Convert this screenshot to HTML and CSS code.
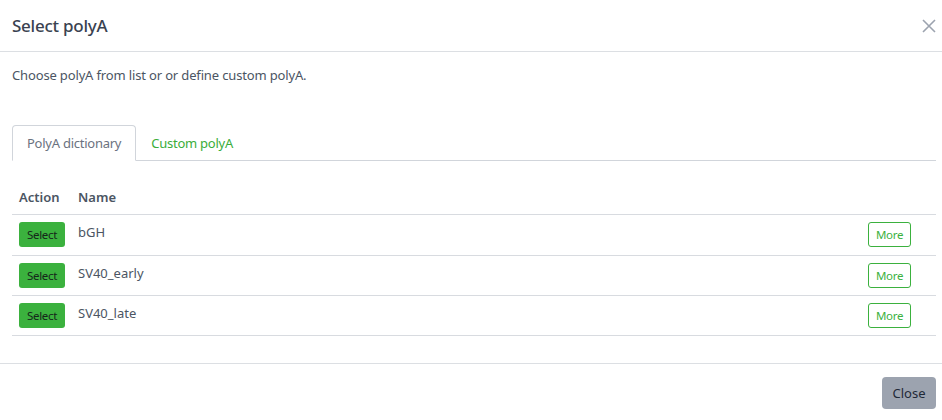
FILE: index.html
```html
<!DOCTYPE html>
<html>
<head>
<meta charset="utf-8">
<link rel="stylesheet" href="styles.css">
</head>
<body>
<div class="modal">
  <div class="modal-header">
    <h5 class="modal-title">Select polyA</h5>
    <button class="btn-close" aria-label="Close">
      <svg width="14" height="14" viewBox="0 0 14 14"><path d="M1 1L13 13M13 1L1 13" stroke="#9ca3af" stroke-width="1.6" fill="none"/></svg>
    </button>
  </div>
  <div class="modal-body">
    <p class="intro">Choose polyA from list or or define custom polyA.</p>
    <div class="tabs">
      <div class="tab active">PolyA dictionary</div>
      <div class="tab">Custom polyA</div>
    </div>
    <table class="table">
      <thead>
        <tr><th class="c-action">Action</th><th class="c-name">Name</th><th class="c-more"></th></tr>
      </thead>
      <tbody>
        <tr class="first"><td class="c-action"><button class="btn-select">Select</button></td><td class="c-name">bGH</td><td class="c-more"><button class="btn-more">More</button></td></tr>
        <tr><td class="c-action"><button class="btn-select">Select</button></td><td class="c-name">SV40_early</td><td class="c-more"><button class="btn-more">More</button></td></tr>
        <tr><td class="c-action"><button class="btn-select">Select</button></td><td class="c-name">SV40_late</td><td class="c-more"><button class="btn-more">More</button></td></tr>
      </tbody>
    </table>
  </div>
  <div class="modal-footer">
    <button class="btn-close-footer">Close</button>
  </div>
</div>
</body>
</html>
```
FILE: styles.css
```css
html, body {
  margin: 0;
  padding: 0;
  background: #ffffff;
}
body {
  font-family: "Noto Sans", "Open Sans", sans-serif;
  color: #4b5563;
  font-size: 13px;
}
.modal {
  width: 942px;
}
.modal-header {
  height: 52px;
  border-bottom: 1px solid #dcdfe3;
  display: flex;
  align-items: center;
  justify-content: space-between;
  padding: 0 6px 0 12px;
  box-sizing: border-box;
}
.modal-title {
  margin: 0;
  font-size: 17px;
  font-weight: 500;
  color: #3a4250;
  letter-spacing: -0.25px;
}
.btn-close {
  border: 0;
  background: transparent;
  padding: 0;
  width: 14px;
  height: 14px;
  display: flex;
}
.modal-body {
  padding: 13px 6px 27px 12px;
}
.intro {
  margin: 0 0 40px 0;
  line-height: 20px;
  color: #4b5563;
  letter-spacing: -0.15px;
}
.tabs {
  display: flex;
  height: 35px;
  border-bottom: 1px solid #d1d5db;
}
.tab {
  padding: 0 14px;
  line-height: 35px;
  color: #3aad3a;
  letter-spacing: -0.25px;
  margin-bottom: -1px;
  border: 1px solid transparent;
}
.tab.active {
  color: #6b7280;
  border-color: #d1d5db;
  border-bottom-color: #ffffff;
  border-radius: 4px 4px 0 0;
  background: #fff;
}
.table {
  width: 100%;
  border-collapse: collapse;
  margin-top: 18px;
}
.table th {
  height: 35px;
  text-align: left;
  font-weight: 600;
  color: #4b5563;
  border-bottom: 1px solid #d8dbe0;
  padding: 0 6px;
  vertical-align: middle;
}
.table td {
  height: 25px;
  padding: 7px 6px 7px 6px;
  border-bottom: 1px solid #d8dbe0;
  vertical-align: top;
  line-height: 20px;
}
.table tr.first td {
  padding-bottom: 8px;
}
.table th.c-action, .table td.c-action {
  width: 46px;
  padding-left: 7px;
  padding-right: 7px;
}
.table td.c-more {
  text-align: right;
  padding-right: 25px;
}
.c-name {
  color: #4b5563;
}
.btn-select {
  width: 46px;
  height: 25px;
  border: 0;
  border-radius: 3px;
  background: #3bb13e;
  color: #15261a;
  font-family: "Noto Sans", sans-serif;
  font-size: 11.5px;
  letter-spacing: -0.3px;
  padding: 0;
  display: block;
}
.btn-more {
  width: 43px;
  height: 25px;
  border: 1px solid #3bb13e;
  border-radius: 3px;
  background: #fff;
  color: #3bb13e;
  font-family: "Noto Sans", sans-serif;
  font-size: 11.5px;
  letter-spacing: -0.3px;
  padding: 0;
}
.modal-footer {
  border-top: 1px solid #dcdfe3;
  padding: 13px 6px 11px 12px;
  display: flex;
  justify-content: flex-end;
}
.btn-close-footer {
  width: 54px;
  height: 32px;
  border: 0;
  border-radius: 4px;
  background: #9ca3af;
  color: #1f2937;
  font-family: "Noto Sans", sans-serif;
  font-size: 13px;
  padding: 0;
}
```
